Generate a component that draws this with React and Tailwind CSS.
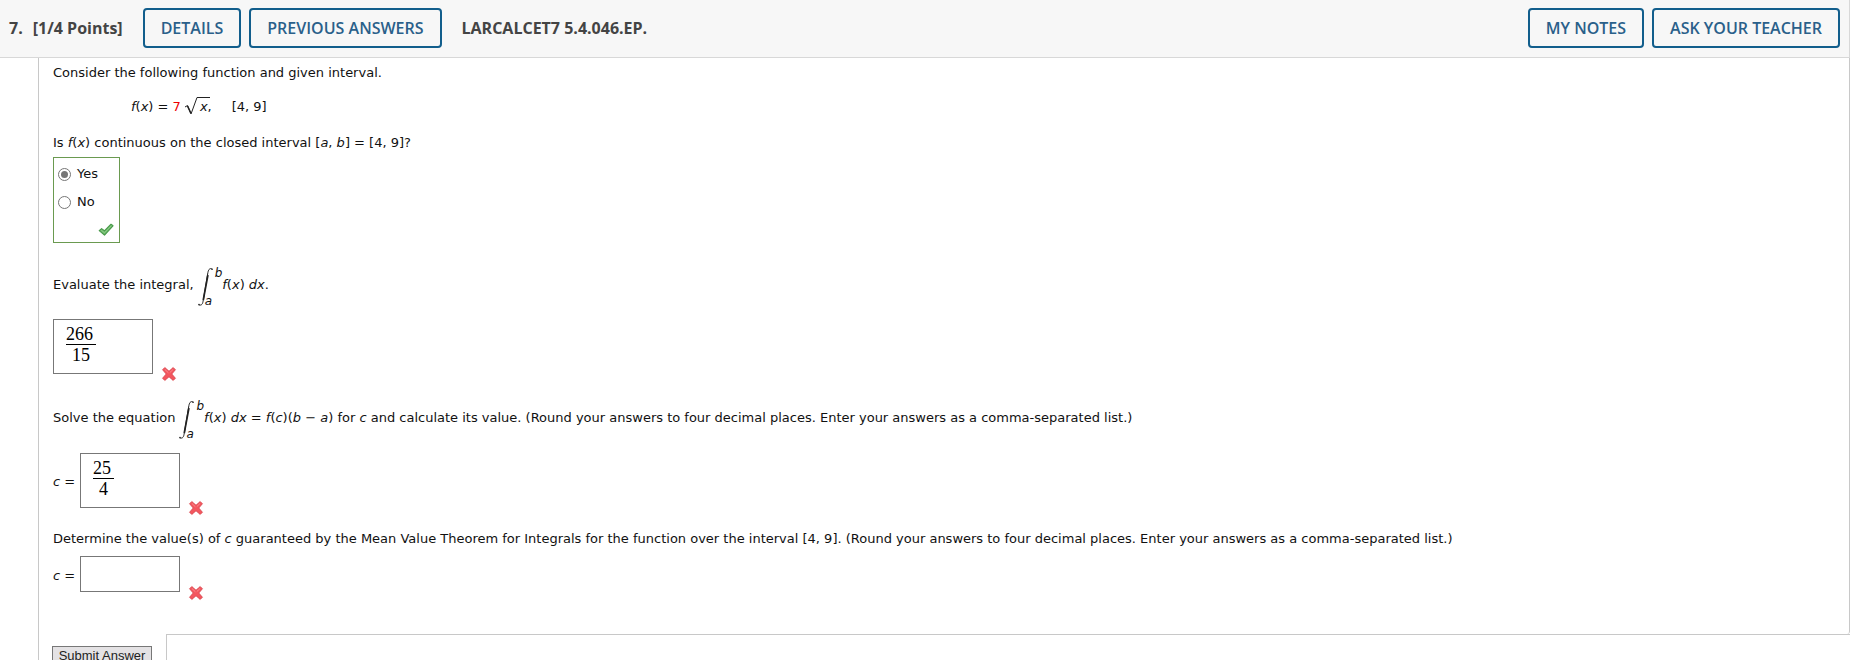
import { useState } from "react";

const HEADER_BTN =
  "h-10 rounded-[4px] border-2 border-[#125e8c] px-4 font-['Open_Sans',sans-serif] text-base font-semibold text-[#2a608a]";

function HeaderButton({ children }) {
  return (
    <button type="button" className={HEADER_BTN}>
      {children}
    </button>
  );
}

function CheckMark() {
  return (
    <svg viewBox="0 0 16 16" className="h-4 w-4" aria-label="Correct">
      <path
        d="M1.2 8.6 3.6 6.6l2.8 2.2L13 2.2l2 1.6-8.5 9.4z"
        fill="#6cb868"
        stroke="#4a9a4c"
        strokeWidth="1.1"
        strokeLinejoin="round"
      />
      <path d="M3.2 8.2 6.5 10.8l7-7.2" fill="none" stroke="#8fcf8a" strokeWidth="1" />
    </svg>
  );
}

function CrossMark() {
  return (
    <svg viewBox="0 0 16 16" className="h-4 w-4" aria-label="Incorrect">
      <path
        d="M3.8 1.6 8 5.3l4.2-3.7 2.2 2.2L10.7 8l3.7 4.2-2.2 2.2L8 10.7l-4.2 3.7-2.2-2.2L5.3 8 1.6 3.8z"
        fill="#f4565e"
        stroke="#dc4c54"
        strokeWidth="1"
        strokeLinejoin="round"
      />
      <path d="m3.8 3.4 3.6 3.4M12.2 3.4 8.8 6.6" stroke="#fb8c8f" strokeWidth="1" />
    </svg>
  );
}

function Integral() {
  return (
    <span className="ml-1 flex h-10 items-stretch">
      <svg viewBox="0 0 15 40" className="h-10 w-[15px]" aria-hidden="true">
        <path
          d="M14.4 2.2C12.4.9 10.7 1.6 9.9 5.5L5 34.6c-.6 3.2-2 4-4.3 3.2"
          fill="none"
          stroke="#222"
          strokeWidth="1"
        />
        <path d="M9.9 8 5.3 33" stroke="#222" strokeWidth="1.7" />
        <circle cx="14" cy="2.3" r=".8" fill="#222" />
        <circle cx="1" cy="37.6" r=".8" fill="#222" />
      </svg>
      <span className="-ml-2 flex flex-col justify-between text-[12px] italic leading-3">
        <span className="pl-[10px]">b</span>
        <span>a</span>
      </span>
    </span>
  );
}

function Fraction({ top, bottom }) {
  return (
    <span className="pointer-events-none absolute left-[13px] top-[5px] flex flex-col items-center font-['Liberation_Serif',serif] text-[18px] leading-5 text-black">
      <span className="border-b border-black pr-[3px]">{top}</span>
      <span>{bottom}</span>
    </span>
  );
}

function FractionAnswer({ id, label, top, bottom }) {
  return (
    <div className="flex items-end">
      <div className="relative">
        <input
          id={id}
          aria-label={label}
          className="block h-[55px] w-[100px] border border-[#777] bg-white px-3"
        />
        <Fraction top={top} bottom={bottom} />
      </div>
      <span className="-mb-2 ml-2">
        <CrossMark />
      </span>
    </div>
  );
}

function Radio({ label, checked, onChange }) {
  return (
    <label className="flex h-7 items-center gap-[6px]">
      <input
        type="radio"
        name="continuous"
        className="h-[13px] w-[13px] appearance-none rounded-full border border-[#767676] bg-white bg-clip-content p-[2px] checked:bg-[#767676]"
        checked={checked}
        onChange={onChange}
      />
      {label}
    </label>
  );
}

export default function App() {
  const [continuous, setContinuous] = useState("Yes");

  return (
    <div className="flex h-screen flex-col overflow-hidden bg-white pr-[9px] font-['Verdana','DejaVu_Sans',sans-serif] text-[13px] leading-5 text-[#111]">
      <header className="flex h-[58px] shrink-0 items-center border-b border-r border-[#d8d8d8] bg-[#f7f7f7] pb-px pl-[9px] pr-[9px] font-['Open_Sans',sans-serif] text-base font-bold text-[#444]">
        <span>7.</span>
        <span className="ml-[10px] mr-5">[1/4 Points]</span>
        <div className="flex gap-2">
          <HeaderButton>DETAILS</HeaderButton>
          <HeaderButton>PREVIOUS ANSWERS</HeaderButton>
        </div>
        <span className="ml-5">LARCALCET7 5.4.046.EP.</span>
        <div className="ml-auto flex gap-2">
          <HeaderButton>MY NOTES</HeaderButton>
          <HeaderButton>ASK YOUR TEACHER</HeaderButton>
        </div>
      </header>

      <main className="ml-[38px] shrink-0 rounded-br-[3px] border-l border-r border-[#c8c8c8] pb-[42px] pl-[14px] pt-[5px]">
        <p>Consider the following function and given interval.</p>

        <p className="mt-[14px] flex items-center pl-[78px]">
          <span>
            <i>f</i>(<i>x</i>) = <span className="text-[#e00]">7</span>
          </span>
          <span className="flex items-center">
            <svg viewBox="0 0 28 20" className="-mr-[11px] ml-[2px] h-5 w-7" aria-hidden="true">
              <path d="m2 10 2.5-1.5L8 17l6-16.5h13" fill="none" stroke="#222" strokeWidth="1" />
              <path d="m4.5 9 3.3 7" stroke="#222" strokeWidth="1.5" />
            </svg>
            <i>x</i>,
          </span>
          <span className="ml-5">[4, 9]</span>
        </p>

        <p className="mt-4">
          Is <i>f</i>(<i>x</i>) continuous on the closed interval [<i>a</i>, <i>b</i>] = [4, 9]?
        </p>

        <fieldset className="mt-1 flex h-[86px] w-[67px] flex-col border border-[#6a9a50] pl-1 pt-[2px]">
          <Radio label="Yes" checked={continuous === "Yes"} onChange={() => setContinuous("Yes")} />
          <Radio label="No" checked={continuous === "No"} onChange={() => setContinuous("No")} />
          <span className="mr-[5px] mt-[6px] self-end">
            <CheckMark />
          </span>
        </fieldset>

        <p className="mt-6 flex items-center">
          <span className="-mt-1">Evaluate the integral,</span>
          <Integral />
          <span className="-mt-1">
            <i>f</i>(<i>x</i>) <i>dx</i>.
          </span>
        </p>

        <div className="mt-3">
          <FractionAnswer id="integral" label="Value of the integral" top="266" bottom="15" />
        </div>

        <p className="mt-[26px] flex items-center">
          <span className="-mt-1">Solve the equation</span>
          <Integral />
          <span className="-mt-1">
            <i>f</i>(<i>x</i>) <i>dx</i> = <i>f</i>(<i>c</i>)(<i>b</i> − <i>a</i>) for <i>c</i> and calculate its value.
            (Round your answers to four decimal places. Enter your answers as a comma-separated list.)
          </span>
        </p>

        <div className="mt-[13px] flex items-center">
          <label htmlFor="equation" className="w-[27px] pt-[3px]">
            <i>c</i> =
          </label>
          <FractionAnswer id="equation" label="c, from the equation" top="25" bottom="4" />
        </div>

        <p className="mt-[21px]">
          Determine the value(s) of <i>c</i> guaranteed by the Mean Value Theorem for Integrals for the function over the
          interval [4, 9]. (Round your answers to four decimal places. Enter your answers as a comma-separated list.)
        </p>

        <div className="mt-[7px] flex items-center">
          <label htmlFor="mean-value" className="w-[27px] pt-[3px]">
            <i>c</i> =
          </label>
          <div className="flex items-end">
            <input id="mean-value" className="h-9 w-[100px] border border-[#777] bg-white px-3" />
            <span className="-mb-[9px] ml-2">
              <CrossMark />
            </span>
          </div>
        </div>
      </main>

      <footer className="ml-[38px] flex grow border-l border-[#c8c8c8]">
        <div className="w-[127px] shrink-0 pl-[13px] pt-3">
          <button
            type="button"
            className="h-5 w-[100px] border border-[#777] bg-[#e4e2e4] font-['Liberation_Sans',sans-serif] text-[13px] leading-4 text-[#222]"
          >
            Submit Answer
          </button>
        </div>
        <div className="grow border-l border-t border-[#c8c8c8]" />
      </footer>
    </div>
  );
}
